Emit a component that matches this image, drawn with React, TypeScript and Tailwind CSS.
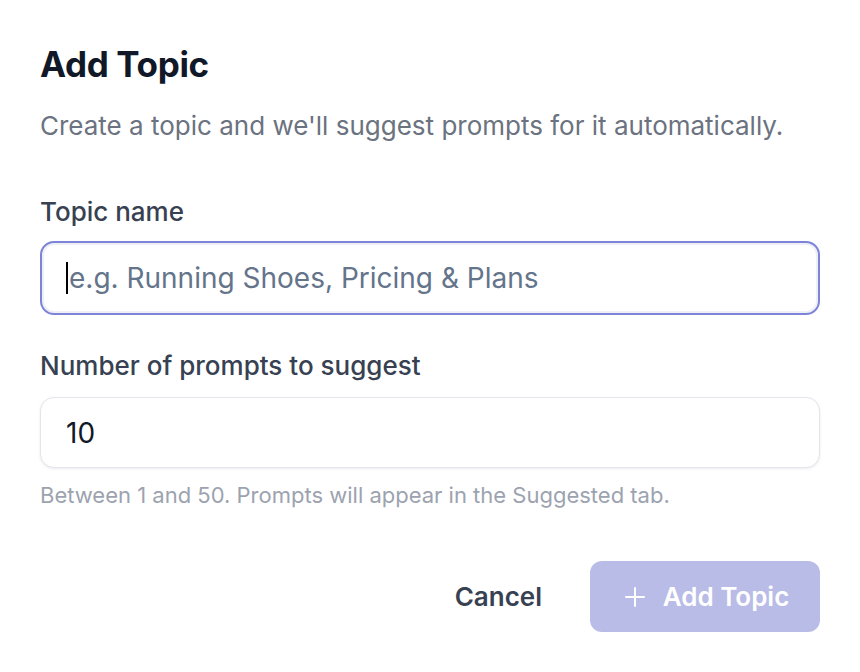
import React from "react";

export default function App() {
  return (
    <div className="w-[860px] h-[672px] bg-white px-10 pt-[44px]" style={{ fontFamily: "Inter, 'Noto Sans', sans-serif" }}>
      <h1 className="text-[35px] leading-[40px] font-bold text-[#111827] tracking-[-0.01em]">Add Topic</h1>
      <p className="mt-[26px] text-[26px] leading-[32px] text-[#6b7280] whitespace-nowrap">Create a topic and we'll suggest prompts for it automatically.</p>

      <div className="mt-[54px]">
        <label className="block text-[26px] leading-[32px] font-medium text-[#374151]">Topic name</label>
        <div className="mt-[13px] h-[74px] rounded-[14px] border-2 border-[#7c83d8] bg-white shadow-[inset_0_0_0_2px_#eef0f6] flex items-center pl-[24px]">
          <span className="w-[2px] h-[32px] bg-black mr-[1px]" />
          <span className="text-[28px] leading-[36px] text-[#64748b]">e.g. Running Shoes, Pricing &amp; Plans</span>
        </div>
      </div>

      <div className="mt-[35px]">
        <label className="block text-[26px] leading-[32px] font-medium text-[#374151]">Number of prompts to suggest</label>
        <div className="mt-[15px] h-[71px] rounded-[14px] border border-[#e2e5ec] bg-white shadow-[0_1px_3px_rgba(0,0,0,0.08)] flex items-center pl-[25px]">
          <span className="text-[28px] leading-[36px] text-[#111827]">10</span>
        </div>
        <p className="mt-[13px] text-[22px] leading-[28px] text-[#9ca3af] whitespace-nowrap">Between 1 and 50. Prompts will appear in the Suggested tab.</p>
      </div>

      <div className="mt-[52px] flex justify-end items-center gap-[48px]">
        <span className="text-[26px] font-semibold text-[#374151]">Cancel</span>
        <button className="h-[71px] w-[230px] rounded-[12px] bg-[#b8bce6] flex items-center justify-center gap-[18px] pl-[4px] text-white text-[26px] font-semibold">
          <svg width="20" height="20" viewBox="0 0 20 20" fill="none" stroke="currentColor" strokeWidth="2" strokeLinecap="round">
            <path d="M10 1v18M1 10h18" />
          </svg>
          Add Topic
        </button>
      </div>
    </div>
  );
}
